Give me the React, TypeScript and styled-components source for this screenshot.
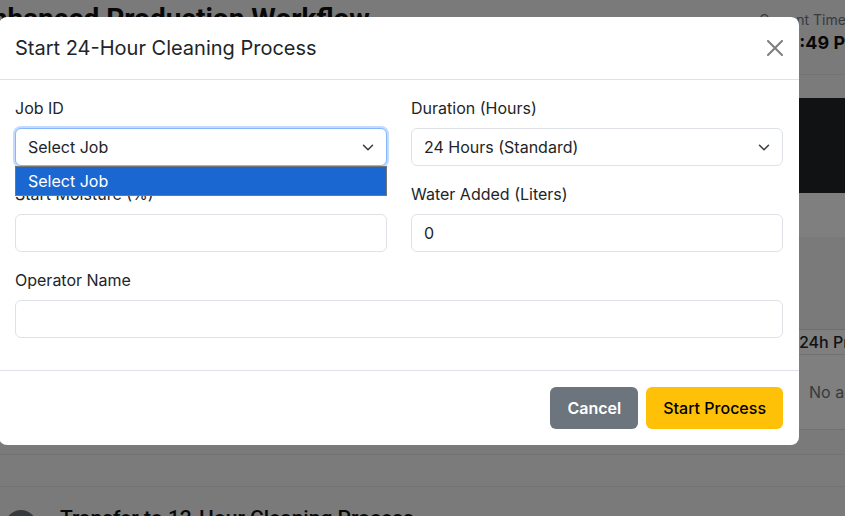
import React from "react";
import styled, { createGlobalStyle } from "styled-components";

const Global = createGlobalStyle`
  html, body { margin: 0; padding: 0; }
  body {
    width: 845px; height: 516px; overflow: hidden;
    font-family: Inter, "Liberation Sans", Arial, sans-serif;
    color: #212529; background: #f4f5f7;
  }
  * { box-sizing: border-box; }
`;

/* ---------- background page ---------- */
const Page = styled.div`
  width: 900px;
  margin-left: -24px;
  height: 516px;
  overflow: hidden;
  background: #f4f5f7;
  display: flex;
  flex-direction: column;
`;
const TopBar = styled.header`
  height: 75px;
  flex: none;
  display: flex;
  justify-content: space-between;
  align-items: flex-start;
  padding: 0 2px 0 0;
  border-bottom: 1px solid #e6e6e6;
`;
const PageTitle = styled.h1`
  margin: 2px 0 0;
  font-family: Roboto, "Liberation Sans", Arial, sans-serif;
  font-size: 28px;
  font-weight: 700;
  color: #111;
  white-space: nowrap;
`;
const Clock = styled.div`
  margin-top: 10px;
  width: 115px;
  white-space: nowrap;
`;
const ClockLabel = styled.div`
  font-size: 14px;
  color: #6c757d;
  line-height: 20px;
`;
const ClockValue = styled.div`
  font-size: 18px;
  font-weight: 700;
  color: #111;
  line-height: 26px;
`;
const Strip = styled.div`
  height: 23px;
  flex: none;
  background: #f7f7f7;
`;
const DarkCard = styled.div`
  height: 95px;
  flex: none;
  background: #232427;
`;
const WhiteGap = styled.div`
  height: 44px;
  flex: none;
  background: #ffffff;
`;
const CardHead = styled.div`
  height: 93px;
  flex: none;
  background: #f4f4f4;
  border-bottom: 1px solid #dcdcdc;
`;
const TableRow = styled.div<{ $h: number; $muted?: boolean }>`
  height: ${(p) => p.$h}px;
  flex: none;
  display: flex;
  align-items: center;
  justify-content: flex-end;
  background: #ffffff;
  border-bottom: 1px solid #e2e2e2;
  font-size: 16px;
  white-space: nowrap;
  color: ${(p) => (p.$muted ? "#6c757d" : "#212529")};
  font-weight: ${(p) => (p.$muted ? 400 : 500)};
`;
const Cell = styled.span<{ $w: number }>`
  width: ${(p) => p.$w}px;
  overflow: hidden;
`;
const Spacer = styled.div<{ $h: number; $bg: string }>`
  height: ${(p) => p.$h}px;
  flex: none;
  background: ${(p) => p.$bg};
  border-bottom: 1px solid #e4e4e4;
`;
const Section = styled.div`
  display: flex;
  align-items: flex-start;
  gap: 23px;
  padding: 18px 0 0 29px;
`;
const Dot = styled.div`
  width: 32px;
  height: 32px;
  margin-top: 5px;
  border-radius: 50%;
  background: #6c757d;
  flex: none;
`;
const SectionTitle = styled.h3`
  margin: 0;
  font-family: Roboto, "Liberation Sans", Arial, sans-serif;
  font-size: 21px;
  line-height: 26px;
  font-weight: 500;
  color: #111;
  white-space: nowrap;
`;

/* ---------- modal ---------- */
const Backdrop = styled.div`
  position: fixed;
  inset: 0;
  background: rgba(0, 0, 0, 0.5);
`;
const ModalLayer = styled.div`
  position: fixed;
  inset: 0;
  padding-top: 17px;
`;
const Dialog = styled.div`
  width: 800px;
  margin-left: -1px;
  background: #fff;
  border-radius: 8px;
  display: flex;
  flex-direction: column;
`;
const Header = styled.div`
  height: 63px;
  display: flex;
  align-items: center;
  justify-content: space-between;
  padding: 0 16px;
  border-bottom: 1px solid #dee2e6;
`;
const Title = styled.h5`
  margin: 0;
  font-size: 20px;
  line-height: 30px;
  font-weight: 400;
  color: #212529;
`;
const CloseBtn = styled.button`
  width: 24px;
  height: 24px;
  padding: 4px;
  margin-right: -4px;
  border: 0;
  background: transparent;
  opacity: 0.5;
  display: flex;
  align-items: center;
  justify-content: center;
`;
const Body = styled.div`
  padding: 16px 16px 16px;
  display: grid;
  grid-template-columns: 1fr 1fr;
  column-gap: 24px;
`;
const Field = styled.div<{ $full?: boolean }>`
  grid-column: ${(p) => (p.$full ? "1 / -1" : "auto")};
  margin-bottom: 16px;
  position: relative;
`;
const Label = styled.label`
  display: block;
  font-size: 16px;
  line-height: 24px;
  margin-bottom: 8px;
  color: #212529;
`;
const Control = styled.div<{ $focus?: boolean }>`
  height: 38px;
  border: 1px solid ${(p) => (p.$focus ? "#86b7fe" : "#dee2e6")};
  border-radius: 6px;
  box-shadow: ${(p) => (p.$focus ? "0 0 0 2px rgba(13,110,253,.25)" : "none")};
  display: flex;
  align-items: center;
  justify-content: space-between;
  padding: 0 12px;
  font-size: 16px;
  color: #212529;
  background: #fff;
`;
const Footer = styled.div`
  display: flex;
  justify-content: flex-end;
  gap: 8px;
  padding: 16px;
  border-top: 1px solid #dee2e6;
`;
const Button = styled.button<{ $variant: "secondary" | "warning" }>`
  height: 42px;
  padding: 0 16px;
  border-radius: 6px;
  border: 1px solid transparent;
  font-family: inherit;
  font-size: 16px;
  background: ${(p) => (p.$variant === "secondary" ? "#6c757d" : "#ffc107")};
  color: ${(p) => (p.$variant === "secondary" ? "#fff" : "#000")};
  font-weight: ${(p) => (p.$variant === "secondary" ? 600 : 500)};
`;

/* native select popup, drawn over the form */
const PopupLayer = styled.div`
  position: fixed;
  left: 15px;
  top: 166px;
  width: 372px;
`;
const PopupOption = styled.div`
  height: 30px;
  border: 1px solid #767676;
  background: #1a67d2;
  color: #fff;
  font-size: 16px;
  display: flex;
  align-items: center;
  padding-left: 12px;
`;

const Chevron = () => (
  <svg width="12" height="9" viewBox="0 0 16 12" fill="none">
    <path d="m2 3 6 6 6-6" stroke="#343a40" strokeWidth="2" strokeLinecap="round" strokeLinejoin="round" />
  </svg>
);

const CloseIcon = () => (
  <svg width="16" height="16" viewBox="0 0 16 16" fill="#000">
    <path d="M.293.293a1 1 0 0 1 1.414 0L8 6.586 14.293.293a1 1 0 1 1 1.414 1.414L9.414 8l6.293 6.293a1 1 0 0 1-1.414 1.414L8 9.414l-6.293 6.293a1 1 0 0 1-1.414-1.414L6.586 8 .293 1.707a1 1 0 0 1 0-1.414" />
  </svg>
);

export default function App() {
  return (
    <>
      <Global />
      <Page>
        <TopBar>
          <PageTitle>Enhanced Production Workflow</PageTitle>
          <Clock>
            <ClockLabel>Current Time</ClockLabel>
            <ClockValue>3:22:49 PM</ClockValue>
          </Clock>
        </TopBar>
        <Strip />
        <DarkCard />
        <WhiteGap />
        <CardHead />
        <TableRow $h={25}>
          <Cell $w={77}>24h Process</Cell>
        </TableRow>
        <TableRow $h={75} $muted>
          <Cell $w={67}>No active</Cell>
        </TableRow>
        <Spacer $h={25} $bg="#f4f4f4" />
        <Spacer $h={32} $bg="#f6f6f6" />
        <Section>
          <Dot />
          <SectionTitle>Transfer to 12-Hour Cleaning Process</SectionTitle>
        </Section>
      </Page>
      <Backdrop />
      <ModalLayer>
        <Dialog>
          <Header>
            <Title>Start 24-Hour Cleaning Process</Title>
            <CloseBtn aria-label="Close">
              <CloseIcon />
            </CloseBtn>
          </Header>
          <Body>
            <Field>
              <Label>Job ID</Label>
              <Control $focus>
                <span>Select Job</span>
                <Chevron />
              </Control>
            </Field>
            <Field>
              <Label>Duration (Hours)</Label>
              <Control>
                <span>24 Hours (Standard)</span>
                <Chevron />
              </Control>
            </Field>
            <Field>
              <Label>Start Moisture (%)</Label>
              <Control />
            </Field>
            <Field>
              <Label>Water Added (Liters)</Label>
              <Control>
                <span>0</span>
              </Control>
            </Field>
            <Field $full>
              <Label>Operator Name</Label>
              <Control />
            </Field>
          </Body>
          <Footer>
            <Button $variant="secondary">Cancel</Button>
            <Button $variant="warning">Start Process</Button>
          </Footer>
        </Dialog>
      </ModalLayer>
      <PopupLayer>
        <PopupOption>Select Job</PopupOption>
      </PopupLayer>
    </>
  );
}
